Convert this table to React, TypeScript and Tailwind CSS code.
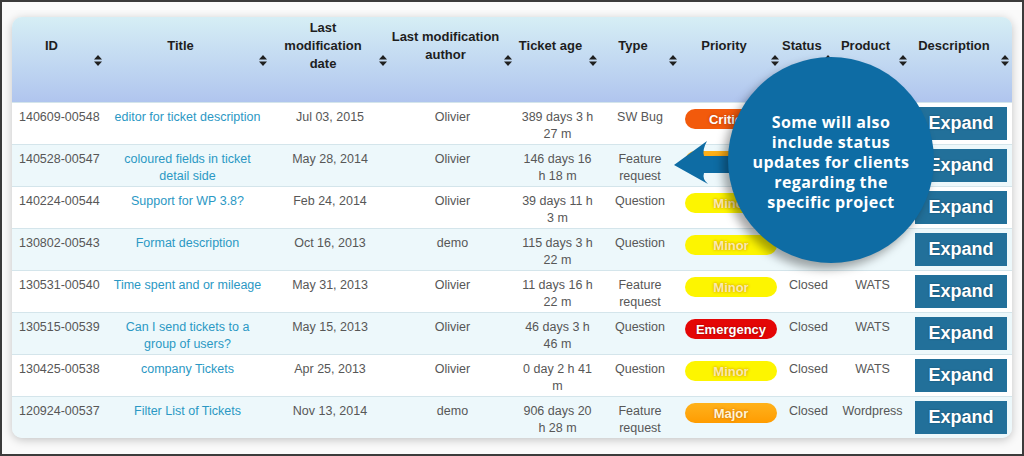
import React from 'react';

type Priority = 'Critical' | 'Major' | 'Minor' | 'Emergency';

interface Ticket {
  id: string;
  title: string[];
  date: string;
  author: string;
  age: string[];
  type: string[];
  priority: Priority;
  status: string;
  product: string;
}

// status / product of the first rows sit under the callout bubble
const tickets: Ticket[] = [
  { id: '140609-00548', title: ['editor for ticket description'], date: 'Jul 03, 2015', author: 'Olivier', age: ['389 days 3 h', '27 m'], type: ['SW Bug'], priority: 'Critical', status: '', product: '' },
  { id: '140528-00547', title: ['coloured fields in ticket', 'detail side'], date: 'May 28, 2014', author: 'Olivier', age: ['146 days 16', 'h 18 m'], type: ['Feature', 'request'], priority: 'Major', status: '', product: '' },
  { id: '140224-00544', title: ['Support for WP 3.8?'], date: 'Feb 24, 2014', author: 'Olivier', age: ['39 days 11 h', '3 m'], type: ['Question'], priority: 'Minor', status: '', product: '' },
  { id: '130802-00543', title: ['Format description'], date: 'Oct 16, 2013', author: 'demo', age: ['115 days 3 h', '22 m'], type: ['Question'], priority: 'Minor', status: '', product: '' },
  { id: '130531-00540', title: ['Time spent and or mileage'], date: 'May 31, 2013', author: 'Olivier', age: ['11 days 16 h', '22 m'], type: ['Feature', 'request'], priority: 'Minor', status: 'Closed', product: 'WATS' },
  { id: '130515-00539', title: ['Can I send tickets to a', 'group of users?'], date: 'May 15, 2013', author: 'Olivier', age: ['46 days 3 h', '46 m'], type: ['Question'], priority: 'Emergency', status: 'Closed', product: 'WATS' },
  { id: '130425-00538', title: ['company Tickets'], date: 'Apr 25, 2013', author: 'Olivier', age: ['0 day 2 h 41', 'm'], type: ['Question'], priority: 'Minor', status: 'Closed', product: 'WATS' },
  { id: '120924-00537', title: ['Filter List of Tickets'], date: 'Nov 13, 2014', author: 'demo', age: ['906 days 20', 'h 28 m'], type: ['Feature', 'request'], priority: 'Major', status: 'Closed', product: 'Wordpress' },
];

const badgeStyles: Record<Priority, string> = {
  Critical: 'bg-[#f25a0c] text-white [text-shadow:0_0_3px_#b83a00]',
  Major: 'bg-linear-to-b from-[#ffb21a] to-[#ff9c00] text-[#fff3d6] [text-shadow:0_0_3px_#c46a00]',
  Minor: 'bg-[#fdf500] text-[#fbeab0] [text-shadow:0_0_3px_#c98a00]',
  Emergency: 'bg-[#e40606] text-white [text-shadow:0_0_2px_#8a0000]',
};

const GRID = 'grid grid-cols-[93px_165px_120px_125px_85px_80px_102px_53px_75px_102px]';

const headers: string[][] = [
  ['ID'],
  ['Title'],
  ['Last', 'modification', 'date'],
  ['Last modification', 'author'],
  ['Ticket age'],
  ['Type'],
  ['Priority'],
  ['Status'],
  ['Product'],
  ['Description'],
];

const SortIcon: React.FC = () => (
  <svg width="8" height="11" viewBox="0 0 8 11" className="block">
    <path d="M0 4.5 L4 0 L8 4.5 Z" fill="#1f1f1f" />
    <path d="M0 6.5 L8 6.5 L4 11 Z" fill="#1f1f1f" />
  </svg>
);

const Lines: React.FC<{ lines: string[] }> = ({ lines }) => (
  <>
    {lines.map((l, i) => (
      <div key={i} className="whitespace-nowrap">
        {l}
      </div>
    ))}
  </>
);

export default function App() {
  return (
    <div className="relative w-[1024px] h-[456px] overflow-hidden border-2 border-[#3b3b3b] bg-[#fafafa] pt-[15px] px-[10px] font-['Liberation_Sans',Arial,sans-serif]">
      {/* table card */}
      <div className="w-[1000px] rounded-[10px] overflow-hidden bg-[#edf8fb] shadow-[0_2px_10px_rgba(0,0,0,0.22)]">
        <div className={`${GRID} h-[85px] bg-linear-to-b from-[#d6eef5] to-[#b0c5ee]`}>
          {headers.map((h) => (
            <div key={h.join(' ')} className="flex">
              <div className="flex-1 h-[58px] flex flex-col items-center justify-center text-center text-[13px] leading-[18px] font-bold text-[#1e1e1e]">
                <Lines lines={h} />
              </div>
              <div className="w-[14px] pt-[38px] flex justify-center">
                <SortIcon />
              </div>
            </div>
          ))}
        </div>

        {tickets.map((t, i) => (
          <div
            key={t.id}
            className={`${GRID} h-[42px] border-t border-[#d4e5eb] text-[12.5px] leading-[17px] text-[#575757] ${i % 2 === 1 ? 'bg-[#edf8fb]' : 'bg-white'}`}
          >
            <div className="pl-[7px] pt-[6px]">{t.id}</div>
            <div className="pt-[6px] text-center text-[#2b98c4]">
              <Lines lines={t.title} />
            </div>
            <div className="pt-[6px] text-center">{t.date}</div>
            <div className="pt-[6px] text-center">{t.author}</div>
            <div className="pt-[6px] text-center">
              <Lines lines={t.age} />
            </div>
            <div className="pt-[6px] text-center">
              <Lines lines={t.type} />
            </div>
            <div className="pt-[6px] flex justify-center">
              <div
                className={`w-[92px] h-[20px] rounded-full flex items-center justify-center text-[13px] font-bold ${badgeStyles[t.priority]}`}
              >
                {t.priority}
              </div>
            </div>
            <div className="pt-[6px] text-center">{t.status}</div>
            <div className="pt-[6px] text-center">{t.product}</div>
            <div className="pt-[4px] flex justify-center">
              <div className="w-[92px] h-[33px] bg-[#22709a] flex items-center justify-center text-white text-[18px] font-bold [text-shadow:0_0_2px_rgba(0,0,0,0.35)]">
                Expand
              </div>
            </div>
          </div>
        ))}
      </div>

      {/* callout arrow */}
      <svg
        width="1020"
        height="452"
        viewBox="0 0 1020 452"
        className="absolute left-0 top-0 pointer-events-none"
      >
        <path
          d="M672 163 L705 139 Q700 148 702 154 L745 154 L745 171 L702 171 Q700 177 706 182 Z"
          fill="#0e6ca4"
        />
      </svg>

      {/* callout bubble */}
      <div className="absolute left-[726px] top-[55px] w-[206px] h-[206px] rounded-full bg-[#0e6ca4] shadow-[-5px_6px_10px_rgba(0,0,0,0.35)] flex items-center justify-center text-center text-white font-['Open_Sans',sans-serif] font-bold text-[16px] tracking-[0.4px] leading-[20px] pt-[4px]">
        <div>
          Some will also
          <br />
          include status
          <br />
          updates for clients
          <br />
          regarding the
          <br />
          specific project
        </div>
      </div>
    </div>
  );
}
